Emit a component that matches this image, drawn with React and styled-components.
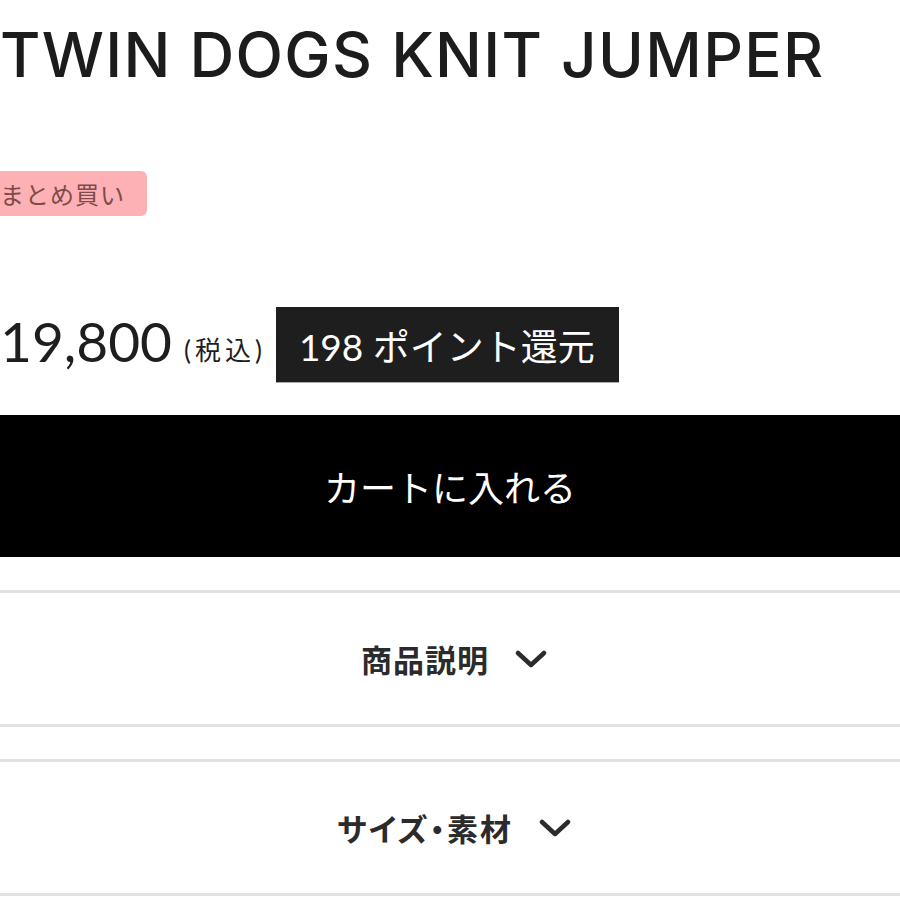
import React from 'react';
import styled, { createGlobalStyle } from 'styled-components';

const Global = createGlobalStyle`
  html, body { margin: 0; padding: 0; background: #fff; }
  body { font-family: Inter, "Noto Sans CJK JP", sans-serif; color: #1e1e1e; overflow: hidden; }
`;

const Page = styled.div`
  width: 900px;
  display: flex;
  flex-direction: column;
`;

const Title = styled.h1`
  margin: 24px 0 0 0;
  font-family: Inter, sans-serif;
  font-weight: 500;
  font-size: 62px;
  line-height: 1;
  letter-spacing: 1.3px;
  color: #1c1c1c;
  white-space: nowrap;
`;

const Badge = styled.span`
  align-self: flex-start;
  margin: 85px 0 0 -12px;
  height: 45px;
  padding: 0 22px 0 12px;
  display: flex;
  align-items: center;
  background: #fdb1b4;
  border-radius: 6px;
  color: #7d4b4b;
  font-family: "Noto Sans CJK JP", sans-serif;
  font-size: 24px;
  letter-spacing: 1px;
`;

const PriceRow = styled.div`
  margin-top: 91px;
  display: flex;
  align-items: center;
`;

const Price = styled.span`
  font-family: Lato, sans-serif;
  font-size: 55px;
  font-weight: 400;
  line-height: 1;
  color: #1e1e1e;
  margin-top: -6px;
`;

const Tax = styled.span`
  margin-left: 12px;
  margin-top: 8px;
  font-family: Lato, "Noto Sans CJK JP", sans-serif;
  font-size: 26px;
  letter-spacing: 4px;
  color: #1e1e1e;
`;

const Points = styled.span`
  margin-left: 10px;
  height: 75px;
  padding: 0 24px 0 23px;
  display: flex;
  align-items: center;
  background: #1e1e1e;
  color: #fff;
  font-family: Lato, "Noto Sans CJK JP", sans-serif;
  font-size: 37px;
  box-shadow: 0 1px 0 #aaa;
`;

const CartButton = styled.button`
  margin-top: 33px;
  width: 900px;
  height: 142px;
  border: 0;
  background: #000;
  color: #fff;
  font-family: "Noto Sans CJK JP", sans-serif;
  font-size: 36px;
  cursor: pointer;
`;

const Accordions = styled.div`
  margin-top: 33px;
  display: flex;
  flex-direction: column;
  gap: 32px;
`;

const Item = styled.div`
  height: 131px;
  border-top: 3px solid #e2e2e2;
  border-bottom: 3px solid #e2e2e2;
  display: flex;
  align-items: center;
  justify-content: center;
  gap: 26px;
  padding-left: 8px;
`;

const ItemLabel = styled.span`
  font-family: "Noto Sans CJK JP", sans-serif;
  font-weight: 700;
  font-size: 31px;
  color: #2b2b2b;
  letter-spacing: ${p => p.$spacing || 1}px;
  font-feature-settings: "palt";
`;

const Chevron = () => (
  <svg width="32" height="20" viewBox="0 0 32 20">
    <polyline points="3,4 16,16 29,4" fill="none" stroke="#2b2b2b" strokeWidth="4.5" strokeLinecap="round" strokeLinejoin="round" />
  </svg>
);

export default function App() {
  return (
    <Page>
      <Global />
      <Title>TWIN DOGS KNIT JUMPER</Title>
      <Badge>まとめ買い</Badge>
      <PriceRow>
        <Price>19,800</Price>
        <Tax>(税込)</Tax>
        <Points>198 ポイント還元</Points>
      </PriceRow>
      <CartButton>カートに入れる</CartButton>
      <Accordions>
        <Item>
          <ItemLabel>商品説明</ItemLabel>
          <Chevron />
        </Item>
        <Item>
          <ItemLabel $spacing={2}>サイズ・素材</ItemLabel>
          <Chevron />
        </Item>
      </Accordions>
    </Page>
  );
}
